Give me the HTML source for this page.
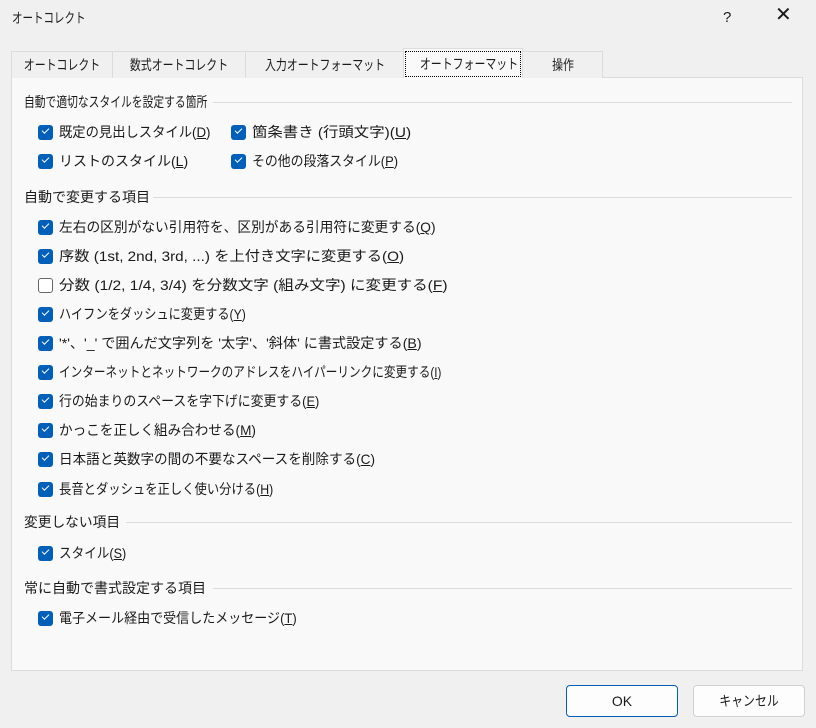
<!DOCTYPE html>
<html><head><meta charset="utf-8"><style>
*{margin:0;padding:0;box-sizing:border-box}
body{width:816px;height:728px;background:#f0f0f0;font-family:"Liberation Sans","Noto Sans CJK JP",sans-serif;font-size:14px;color:#1a1a1a;position:relative;overflow:hidden}
.a{position:absolute;white-space:nowrap;line-height:18px;transform-origin:left center}
.tab{position:absolute;top:51px;height:27px;border:1px solid #dcdcdc;border-bottom:none;background:#f0f0f0;text-align:center;line-height:26px;white-space:nowrap;overflow:hidden}
.tab span{display:inline-block;transform:scaleX(0.78)}
.panel{position:absolute;left:11px;top:77px;width:792px;height:594px;background:#f9f9f9;border:1px solid #dcdcdc}
.hdr{position:absolute;left:24px;line-height:18px;white-space:nowrap;transform-origin:left center}
.line{position:absolute;height:1px;background:#dcdcdc;right:24px}
.cb{position:absolute;width:15px;height:15px;border-radius:3px;background:#005fb8}
.cb::after{content:"";position:absolute;left:4px;top:3px;width:6px;height:3px;border-left:1.3px solid #fff;border-bottom:1.3px solid #fff;transform:rotate(-45deg)}
.cb.off{background:#fff;border:1px solid #666}
.cb.off::after{display:none}
.t{position:absolute;line-height:18px;white-space:nowrap;transform-origin:left center}
u{text-decoration:underline}
.btn{position:absolute;top:685px;height:32px;background:#fdfdfd;border:1px solid #d0d0d0;border-radius:4px;text-align:center;line-height:30px}
</style></head><body>
<div class="a" style="left:12px;top:9px;transform:scaleX(0.75)">オートコレクト</div>
<div class="a" style="left:723px;top:9px;font-size:15px">?</div>
<div class="a" style="left:775px;top:6px;font-size:20px;font-weight:300">✕</div>
<div class="panel"></div>
<div class="tab" style="left:11px;width:102px"><span>オートコレクト</span></div>
<div class="tab" style="left:112px;width:134px"><span>数式オートコレクト</span></div>
<div class="tab" style="left:245px;width:159px"><span>入力オートフォーマット</span></div>
<div class="tab" style="left:522px;width:81px"><span>操作</span></div>
<div class="tab" style="left:403px;top:48px;height:30px;width:120px;background:#f9f9f9;line-height:30px"><div style="border:1px dotted #000;line-height:24px;width:116px;margin:2px 0 0 1px;overflow:hidden"><span>オートフォーマット</span></div></div>

<div class="hdr" style="top:93px;transform:scaleX(0.77)">自動で適切なスタイルを設定する箇所</div><div class="line" style="left:213px;top:102px"></div>
<div class="hdr" style="top:188px">自動で変更する項目</div><div class="line" style="left:153px;top:197px"></div>
<div class="hdr" style="top:513px;transform:scaleX(0.98)">変更しない項目</div><div class="line" style="left:126px;top:522px"></div>
<div class="hdr" style="top:579px">常に自動で書式設定する項目</div><div class="line" style="left:213px;top:588px"></div>

<div class="cb" style="left:38px;top:125px"></div><div class="t" style="left:59px;top:123px;transform:scaleX(0.95)">既定の見出しスタイル(<u>D</u>)</div>
<div class="cb" style="left:231px;top:125px"></div><div class="t" style="left:252px;top:123px;transform:scaleX(1.1)">箇条書き (行頭文字)(<u>U</u>)</div>
<div class="cb" style="left:38px;top:154px"></div><div class="t" style="left:59px;top:152px">リストのスタイル(<u>L</u>)</div>
<div class="cb" style="left:231px;top:154px"></div><div class="t" style="left:252px;top:152px;transform:scaleX(0.92)">その他の段落スタイル(<u>P</u>)</div>

<div class="cb" style="left:38px;top:220px"></div><div class="t" style="left:59px;top:218px;transform:scaleX(0.98)">左右の区別がない引用符を、区別がある引用符に変更する(<u>Q</u>)</div>
<div class="cb" style="left:38px;top:249px"></div><div class="t" style="left:59px;top:247px;transform:scaleX(1.09)">序数 (1st, 2nd, 3rd, ...) を上付き文字に変更する(<u>O</u>)</div>
<div class="cb off" style="left:38px;top:278px"></div><div class="t" style="left:59px;top:276px;transform:scaleX(1.11)">分数 (1/2, 1/4, 3/4) を分数文字 (組み文字) に変更する(<u>F</u>)</div>
<div class="cb" style="left:38px;top:307px"></div><div class="t" style="left:59px;top:305px;transform:scaleX(0.87)">ハイフンをダッシュに変更する(<u>Y</u>)</div>
<div class="cb" style="left:38px;top:336px"></div><div class="t" style="left:59px;top:334px;transform:scaleX(1.01)">'*'、'_' で囲んだ文字列を '太字'、'斜体' に書式設定する(<u>B</u>)</div>
<div class="cb" style="left:38px;top:365px"></div><div class="t" style="left:59px;top:363px;transform:scaleX(0.83)">インターネットとネットワークのアドレスをハイパーリンクに変更する(<u>I</u>)</div>
<div class="cb" style="left:38px;top:394px"></div><div class="t" style="left:59px;top:392px;transform:scaleX(0.92)">行の始まりのスペースを字下げに変更する(<u>E</u>)</div>
<div class="cb" style="left:38px;top:423px"></div><div class="t" style="left:59px;top:421px;transform:scaleX(0.97)">かっこを正しく組み合わせる(<u>M</u>)</div>
<div class="cb" style="left:38px;top:452px"></div><div class="t" style="left:59px;top:450px;transform:scaleX(0.97)">日本語と英数字の間の不要なスペースを削除する(<u>C</u>)</div>
<div class="cb" style="left:38px;top:482px"></div><div class="t" style="left:59px;top:480px;transform:scaleX(0.88)">長音とダッシュを正しく使い分ける(<u>H</u>)</div>

<div class="cb" style="left:38px;top:546px"></div><div class="t" style="left:59px;top:544px;transform:scaleX(0.9)">スタイル(<u>S</u>)</div>
<div class="cb" style="left:38px;top:611px"></div><div class="t" style="left:59px;top:609px;transform:scaleX(0.93)">電子メール経由で受信したメッセージ(<u>T</u>)</div>

<div class="btn" style="left:566px;width:112px;border-color:#005fb8">OK</div>
<div class="btn" style="left:693px;width:112px"><span style="display:inline-block;transform:scaleX(0.85)">キャンセル</span></div>
</body></html>
